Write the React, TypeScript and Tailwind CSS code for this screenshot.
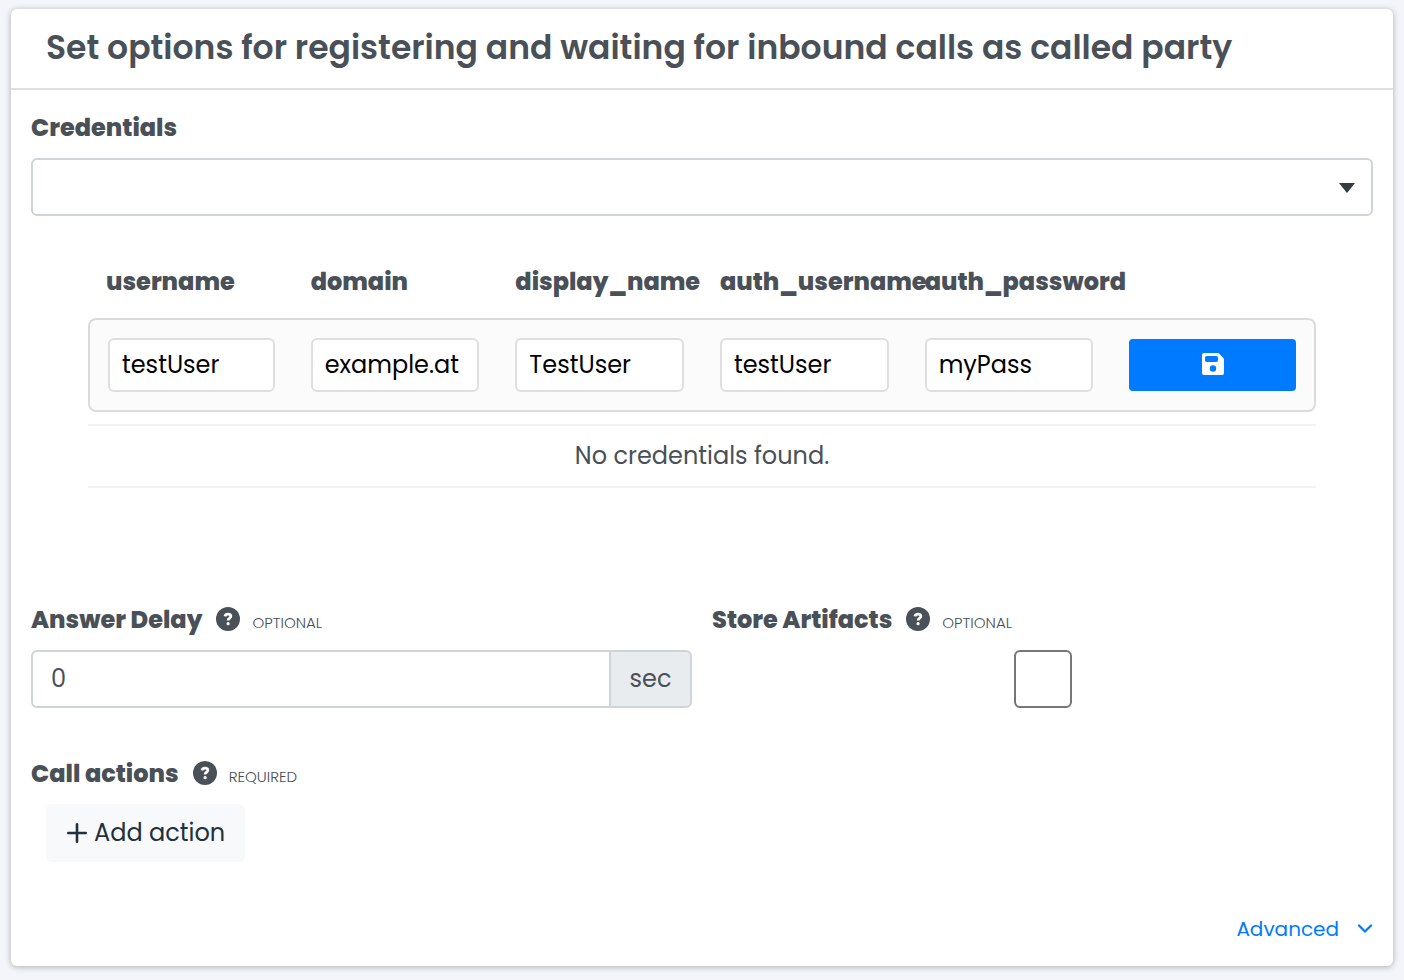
import { useState } from 'react';
import { clsx } from 'clsx';

type Credential = {
  username: string;
  domain: string;
  display_name: string;
  auth_username: string;
  auth_password: string;
};

const COLUMNS: (keyof Credential)[] = [
  'username',
  'domain',
  'display_name',
  'auth_username',
  'auth_password',
];

function HelpIcon() {
  return (
    <svg viewBox="0 0 24 24" className="size-6 shrink-0" aria-hidden="true">
      <circle cx="12" cy="12" r="12" fill="#495057" />
      <path
        d="M8.9 9.3c.4-1.5 1.5-2.2 3.1-2.2 1.8 0 2.9.9 2.9 2.2 0 1.9-2.8 1.9-2.8 4.2"
        fill="none"
        stroke="#fff"
        strokeWidth="2.7"
      />
      <circle cx="12.1" cy="16.7" r="1.6" fill="#fff" />
    </svg>
  );
}

function SaveIcon() {
  return (
    <svg viewBox="0 0 22 22" className="size-[22px]" aria-hidden="true">
      <path
        fill="#fff"
        fillRule="evenodd"
        d="M2 0h13.6a2 2 0 0 1 1.4.6L21.4 5a2 2 0 0 1 .6 1.4V20a2 2 0 0 1-2 2H2a2 2 0 0 1-2-2V2a2 2 0 0 1 2-2Zm2.8 3A1.8 1.8 0 0 0 3 4.8v2.4A1.8 1.8 0 0 0 4.8 9h9.4A1.8 1.8 0 0 0 16 7.2V4.8A1.8 1.8 0 0 0 14.2 3ZM11 12.3a3.2 3.2 0 1 0 0 6.4a3.2 3.2 0 0 0 0-6.4Z"
      />
    </svg>
  );
}

function PlusIcon() {
  return (
    <svg viewBox="0 0 20 20" className="size-5" aria-hidden="true">
      <path d="M10 1.3v17.4M1.3 10h17.4" stroke="currentColor" strokeWidth="2.6" strokeLinecap="round" />
    </svg>
  );
}

function FieldLabel({ htmlFor, text, hint }: { htmlFor: string; text: string; hint?: string }) {
  return (
    <div className="flex h-9 items-center">
      <label htmlFor={htmlFor} className="text-2xl font-extrabold">
        {text}
      </label>
      {hint && (
        <>
          <span className="ml-3.5 pb-0.5">
            <HelpIcon />
          </span>
          <small className="ml-3 pt-1.5 text-[15px] leading-5 font-light">{hint}</small>
        </>
      )}
    </div>
  );
}

function CredentialsTable() {
  const [draft, setDraft] = useState<Credential>({
    username: 'testUser',
    domain: 'example.at',
    display_name: 'TestUser',
    auth_username: 'testUser',
    auth_password: 'myPass',
  });

  return (
    <table className="w-full table-fixed border-separate border-spacing-0">
      <thead>
        <tr>
          {COLUMNS.map((name) => (
            <th
              key={name}
              id={`col-${name}`}
              scope="col"
              className="pb-4 pl-[18px] text-left text-2xl leading-10 font-extrabold whitespace-nowrap"
            >
              {name}
            </th>
          ))}
          <td />
        </tr>
      </thead>
      <tbody>
        <tr>
          {COLUMNS.map((name, i) => (
            <td
              key={name}
              className={clsx(
                'border-y-2 border-[#dbdbdb] bg-[#fbfbfb] px-[18px] py-[18px]',
                i === 0 && 'rounded-l-lg border-l-2'
              )}
            >
              <input
                type="text"
                aria-labelledby={`col-${name}`}
                value={draft[name]}
                onChange={(e) => setDraft({ ...draft, [name]: e.target.value })}
                className="block h-[54px] w-full rounded-md border-2 border-[#dfdfdf] bg-white px-3 pb-0.5 text-2xl text-black"
              />
            </td>
          ))}
          <td className="rounded-r-lg border-y-2 border-r-2 border-[#dbdbdb] bg-[#fbfbfb] px-[18px]">
            <button
              type="button"
              aria-label="Save"
              className="flex h-[52px] w-full items-center justify-center rounded bg-[#007bff] pb-0.5"
            >
              <SaveIcon />
            </button>
          </td>
        </tr>
        <tr>
          <td colSpan={6} className="pt-3">
            <div className="border-y-2 border-[#f2f2f2] py-3 text-center text-2xl leading-9">
              No credentials found.
            </div>
          </td>
        </tr>
      </tbody>
    </table>
  );
}

export default function App() {
  const [delay, setDelay] = useState('0');

  return (
    <div className="min-h-screen bg-[#f4f5fa] px-[11px] pt-[9px] pb-[14px] font-['Poppins','Inter',sans-serif] text-[#495057]">
      <main className="rounded-md bg-white shadow-[0_1px_6px_rgba(0,0,0,0.3)]">
        <header className="border-b-2 border-[#dfdfdf] px-[35px] pt-[15px] pb-4">
          <h1 className="text-[33px] leading-[48px] font-semibold">
            Set options for registering and waiting for inbound calls as called party
          </h1>
        </header>

        <div className="px-5 pt-5 pb-5">
          <FieldLabel htmlFor="credentials" text="Credentials" />
          <div className="relative mt-3">
            <select
              id="credentials"
              className="block h-[58px] w-full appearance-none rounded-md border-2 border-[#ced4da] bg-white px-[18px] text-2xl"
            >
              <option value=""></option>
            </select>
            <svg
              viewBox="0 0 16 10"
              className="pointer-events-none absolute top-[25px] right-[18px] h-[10px] w-4"
              aria-hidden="true"
            >
              <path d="M0 0h16l-8 10z" fill="#343a40" />
            </svg>
          </div>

          <div className="mx-[57px] mt-[46px]">
            <CredentialsTable />
          </div>

          <div className="mt-[114px] grid grid-cols-2 gap-5">
            <div>
              <FieldLabel htmlFor="answer-delay" text="Answer Delay" hint="OPTIONAL" />
              <div className="mt-3 flex h-[58px]">
                <input
                  id="answer-delay"
                  type="text"
                  value={delay}
                  onChange={(e) => setDelay(e.target.value)}
                  className="min-w-0 flex-1 rounded-l-md border-2 border-r-0 border-[#ced4da] bg-white px-[18px] text-2xl"
                />
                <span className="flex w-[83px] items-center justify-center rounded-r-md border-2 border-[#ced4da] bg-[#e9ecef] text-2xl">
                  sec
                </span>
              </div>
            </div>
            <div>
              <FieldLabel htmlFor="store-artifacts" text="Store Artifacts" hint="OPTIONAL" />
              <input
                id="store-artifacts"
                type="checkbox"
                className="mx-auto mt-3 block size-[58px] appearance-none rounded-md border-2 border-[#767676] bg-white checked:bg-[#007bff]"
              />
            </div>
          </div>

          <div className="mt-12">
            <FieldLabel htmlFor="add-action" text="Call actions" hint="REQUIRED" />
            <button
              id="add-action"
              type="button"
              className="mt-3 ml-[15px] flex h-[58px] items-center gap-[7px] rounded-md bg-[#f8f9fa] pr-5 pl-[21px] text-2xl text-[#212f3e]"
            >
              <PlusIcon />
              Add action
            </button>
          </div>

          <div className="mt-[51px] flex justify-end pb-px">
            <button type="button" className="flex items-center gap-[18px] text-xl leading-8 text-[#007bff]">
              Advanced
              <svg viewBox="0 0 16 10" className="h-[10px] w-4" aria-hidden="true">
                <path
                  d="M2 1.5 8 7.5 14 1.5"
                  fill="none"
                  stroke="currentColor"
                  strokeWidth="2.2"
                  strokeLinecap="round"
                  strokeLinejoin="round"
                />
              </svg>
            </button>
          </div>
        </div>
      </main>
    </div>
  );
}
